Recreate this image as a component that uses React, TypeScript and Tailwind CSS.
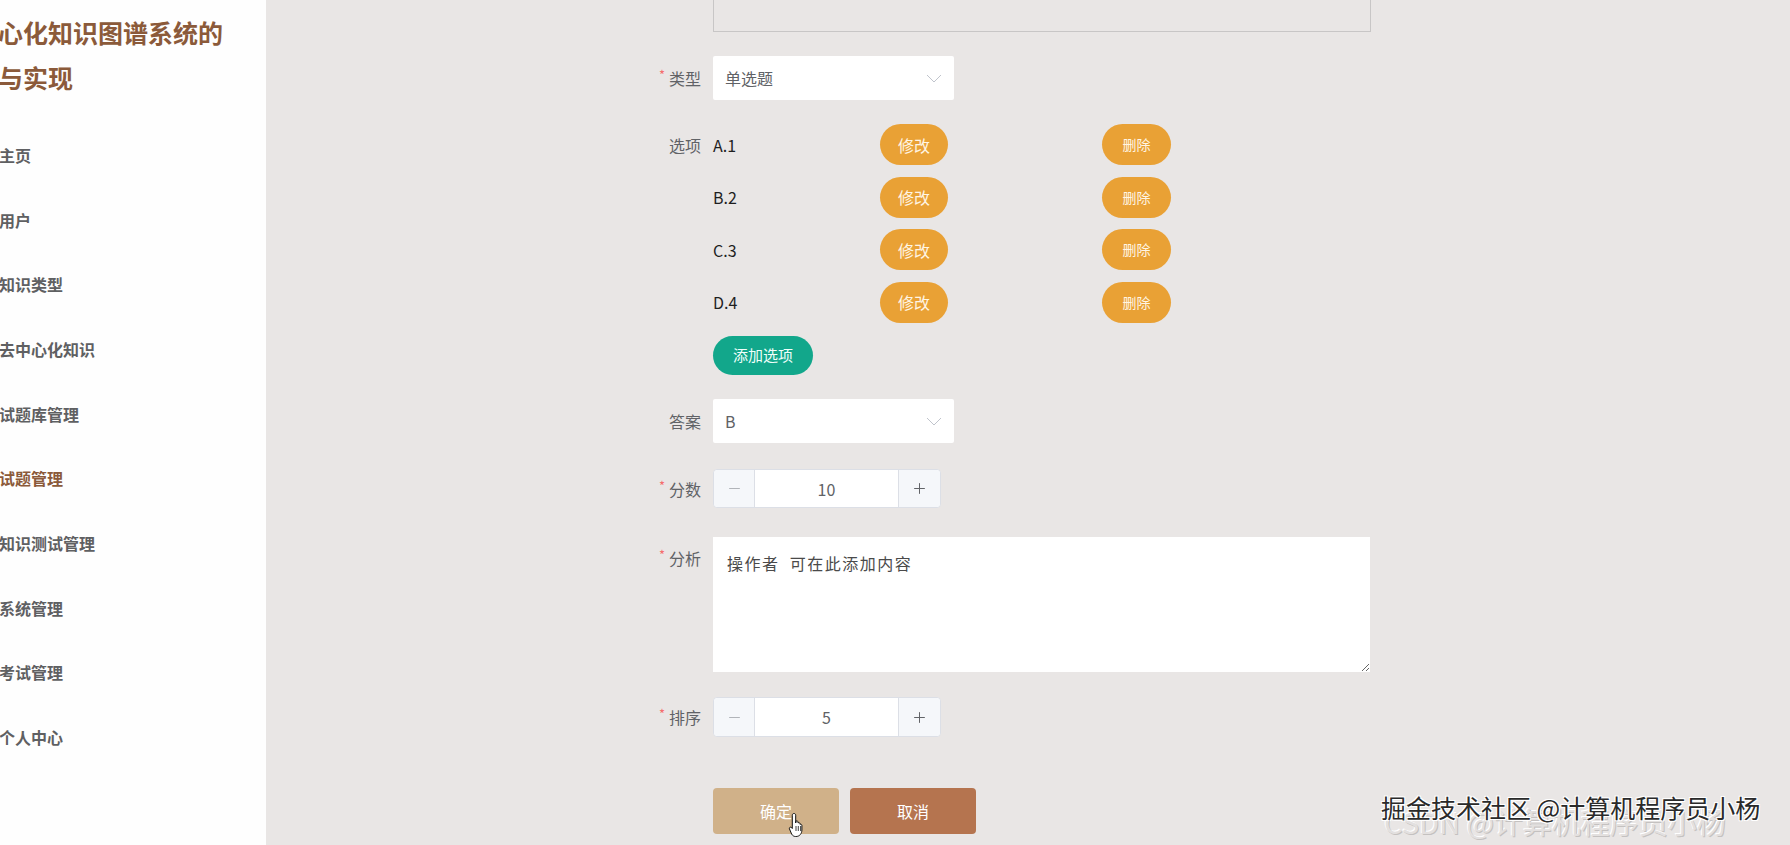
import React from 'react';
import { Minus, Plus } from 'lucide-react';

const menus = ['主页', '用户', '知识类型', '去中心化知识', '试题库管理', '试题管理', '知识测试管理', '系统管理', '考试管理', '个人中心'];
const options = ['A.1', 'B.2', 'C.3', 'D.4'];

const Label: React.FC<{ text: string; required?: boolean; h: string }> = ({ text, required, h }) => (
  <div className={`w-[120px] shrink-0 pr-[12px] flex items-center justify-end text-[16px] text-[#606266] ${h}`}>
    {required && <span className="text-[#f56c6c] text-[13px] mr-[4px] -mt-[6px]">*</span>}
    {text}
  </div>
);

const Chevron = () => (
  <svg width="16" height="9" viewBox="0 0 16 9" fill="none">
    <polyline points="1,1 8,8 15,1" stroke="#c0c4cc" strokeWidth="1" />
  </svg>
);

const SelectBox: React.FC<{ value: string }> = ({ value }) => (
  <div className="w-[241px] h-[44px] bg-white rounded-[2px] flex items-center justify-between pl-[12px] pr-[12px] text-[16px] text-[#606266]">
    <span>{value}</span>
    <Chevron />
  </div>
);

const NumberBox: React.FC<{ value: string; h: string }> = ({ value, h }) => (
  <div className={`w-[228px] bg-white border border-[#dcdfe6] rounded-[4px] flex ${h}`}>
    <div className="w-[41px] bg-[#f5f7fa] border-r border-[#dcdfe6] flex items-center justify-center rounded-l-[4px]">
      <Minus size={17} strokeWidth={1.4} color="#b0b3b8" />
    </div>
    <div className="flex-1 flex items-center justify-center text-[16px] text-[#606266]">{value}</div>
    <div className="w-[42px] bg-[#f5f7fa] border-l border-[#dcdfe6] flex items-center justify-center rounded-r-[4px]">
      <Plus size={17} strokeWidth={1.4} color="#606266" />
    </div>
  </div>
);

export default function App() {
  return (
    <div className="relative flex h-[845px] w-full overflow-hidden bg-[#e9e6e5] font-['Noto_Sans_CJK_SC','Noto_Sans',sans-serif]">
      {/* 侧边栏 */}
      <aside className="w-[266px] shrink-0 h-full bg-[#fefefe] overflow-hidden">
        <div className="pt-[10px] -ml-[52px] text-[25px] font-bold leading-[45px] text-[#8b5a3a] whitespace-nowrap">
          <div>去中心化知识图谱系统的</div>
          <div>设计与实现</div>
        </div>
        <nav className="mt-[22.6px]">
          {menus.map((m) => (
            <div
              key={m}
              className={`h-[64.7px] flex items-center -ml-[1px] text-[16px] font-bold whitespace-nowrap ${
                m === '试题管理' ? 'text-[#8b5a3a]' : 'text-[#5f6062]'
              }`}
            >
              {m}
            </div>
          ))}
        </nav>
      </aside>

      {/* 表单区域 */}
      <main className="flex-1 h-full">
        <div className="ml-[327px] flex flex-col">
          <div className="flex">
            <div className="w-[120px] shrink-0" />
            <div className="w-[658px] h-[32px] border-x border-b border-[#c8c6c6]" />
          </div>

          <div className="flex mt-[24px]">
            <Label text="类型" required h="h-[44px]" />
            <SelectBox value="单选题" />
          </div>

          <div className="flex mt-[24px]">
            <Label text="选项" h="h-[41px]" />
            <div className="flex flex-col">
              {options.map((o, i) => (
                <div key={o} className={`flex items-center h-[41px] ${i > 0 ? 'mt-[11.5px]' : ''}`}>
                  <span className="w-[167px] text-[16px] text-[#1f1f1f]">{o}</span>
                  <button className="w-[68px] h-[41px] rounded-full bg-[#e9a135] text-[16px] text-[#fff5e4]">修改</button>
                  <button className="ml-[154px] w-[69px] h-[41px] rounded-full bg-[#e9a135] text-[14px] text-[#fff5e4]">删除</button>
                </div>
              ))}
              <button className="mt-[13.5px] w-[100px] h-[39px] rounded-full bg-[#12a78b] text-[15px] text-[#f0fffb]">添加选项</button>
            </div>
          </div>

          <div className="flex mt-[24px]">
            <Label text="答案" h="h-[44px]" />
            <SelectBox value="B" />
          </div>

          <div className="flex mt-[26px]">
            <Label text="分数" required h="h-[39px]" />
            <NumberBox value="10" h="h-[39px]" />
          </div>

          <div className="flex mt-[29px]">
            <Label text="分析" required h="h-[42px]" />
            <textarea
              readOnly
              defaultValue="操作者  可在此添加内容"
              className="w-[657px] h-[135px] bg-white px-[14px] pt-[14px] text-[16px] leading-[24px] tracking-[1.5px] text-[#4a4a4a] outline-none"
            />
          </div>

          <div className="flex mt-[25px]">
            <Label text="排序" required h="h-[40px]" />
            <NumberBox value="5" h="h-[40px]" />
          </div>

          <div className="flex mt-[51px]">
            <div className="w-[120px] shrink-0" />
            <button className="w-[126px] h-[46px] rounded-[4px] bg-[#d0b189] text-[16px] text-white">确定</button>
            <button className="ml-[11px] w-[126px] h-[46px] rounded-[4px] bg-[#b5744f] text-[16px] text-white">取消</button>
          </div>
        </div>
      </main>

      {/* 鼠标指针 */}
      <svg className="absolute left-[788px] top-[812px]" width="20" height="26" viewBox="0 0 20 26">
        <path
          d="M6 1.5c1 0 1.7.7 1.7 1.7V11l.3-2c.9-.4 1.8 0 2 .9v1c.8-.5 1.8-.2 2 .7v.8c.8-.4 1.8 0 1.9.9V18c0 3.5-2.3 6.5-5.8 6.5H7.5c-1.7 0-3-1-3.8-2.3L1.5 17c-.5-1 .3-2 1.3-1.8.6.1 1 .5 1.5 1.3V3.2C4.3 2.2 5 1.5 6 1.5z"
          fill="#fff"
          stroke="#111"
          strokeWidth="1"
        />
        <path d="M8 14v5M10.3 14v5M12.6 14v5" stroke="#111" strokeWidth="0.8" />
      </svg>

      {/* 水印 */}
      <div className="absolute left-[1384px] top-[802px] text-[29px] leading-[38px] text-[#e3e0df] whitespace-nowrap [text-shadow:1px_1px_0_#c4c1c0,-1px_-1px_0_#fff]">
        CSDN @计算机程序员小杨
      </div>
      <div className="absolute left-[1381px] top-[791px] text-[25px] leading-[32px] text-[#2a2a2a] whitespace-nowrap [text-shadow:1px_1px_0_#fff,-1px_-1px_0_#fff,1px_-1px_0_#fff,-1px_1px_0_#fff]">
        掘金技术社区 @计算机程序员小杨
      </div>
    </div>
  );
}
